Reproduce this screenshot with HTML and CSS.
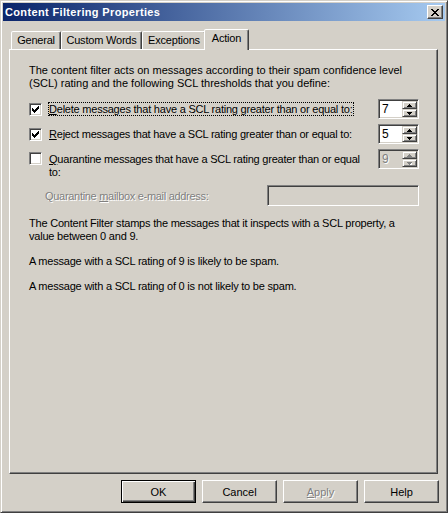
FILE: index.html
```html
<!DOCTYPE html>
<html>
<head>
<meta charset="utf-8">
<title>Content Filtering Properties</title>
<link rel="stylesheet" href="styles.css">
</head>
<body>
<div class="window">
  <div class="titlebar">
    <span class="title">Content Filtering Properties</span>
    <span class="close">
      <svg width="8" height="7" viewBox="0 0 8 7" shape-rendering="crispEdges"><path fill="#000" d="M0 0h2v1H0zM6 0h2v1H6zM1 1h2v1H1zM5 1h2v1H5zM2 2h4v1H2zM3 3h2v1H3zM2 4h4v1H2zM1 5h2v1H1zM5 5h2v1H5zM0 6h2v1H0zM6 6h2v1H6z"/></svg>
    </span>
  </div>

  <div class="tabs">
    <div class="tab tab-general">General</div>
    <div class="tab tab-custom">Custom Words</div>
    <div class="tab tab-exceptions">Exceptions</div>
    <div class="tab tab-action active">Action</div>
  </div>

  <div class="panel">
    <p class="intro">The content filter acts on messages according to their spam confidence level<br>(SCL) rating and the following SCL thresholds that you define:</p>

    <div class="row">
      <span class="check"><svg width="11" height="11" viewBox="0 0 11 11" shape-rendering="crispEdges"><path fill="#000" d="M2 4h1v3H2zM3 5h1v3H3zM4 6h1v3H4zM5 5h1v3H5zM6 4h1v3H6zM7 3h1v3H7zM8 2h1v3H8z"/></svg></span>
      <span class="label focus"><u>D</u>elete messages that have a SCL rating greater than or equal to:</span>
      <span class="spin">
        <span class="spin-value">7</span>
        <span class="spin-btns">
          <span class="spin-btn"><svg width="5" height="3" viewBox="0 0 5 3" shape-rendering="crispEdges"><path d="M2 0h1v1H2zM1 1h3v1H1zM0 2h5v1H0z"/></svg></span>
          <span class="spin-btn"><svg width="5" height="3" viewBox="0 0 5 3" shape-rendering="crispEdges"><path d="M0 0h5v1H0zM1 1h3v1H1zM2 2h1v1H2z"/></svg></span>
        </span>
      </span>
    </div>

    <div class="row">
      <span class="check"><svg width="11" height="11" viewBox="0 0 11 11" shape-rendering="crispEdges"><path fill="#000" d="M2 4h1v3H2zM3 5h1v3H3zM4 6h1v3H4zM5 5h1v3H5zM6 4h1v3H6zM7 3h1v3H7zM8 2h1v3H8z"/></svg></span>
      <span class="label"><u>R</u>eject messages that have a SCL rating greater than or equal to:</span>
      <span class="spin">
        <span class="spin-value">5</span>
        <span class="spin-btns">
          <span class="spin-btn"><svg width="5" height="3" viewBox="0 0 5 3" shape-rendering="crispEdges"><path d="M2 0h1v1H2zM1 1h3v1H1zM0 2h5v1H0z"/></svg></span>
          <span class="spin-btn"><svg width="5" height="3" viewBox="0 0 5 3" shape-rendering="crispEdges"><path d="M0 0h5v1H0zM1 1h3v1H1zM2 2h1v1H2z"/></svg></span>
        </span>
      </span>
    </div>

    <div class="row row-top">
      <span class="check"></span>
      <span class="label"><u>Q</u>uarantine messages that have a SCL rating greater than or equal<br>to:</span>
      <span class="spin disabled">
        <span class="spin-value">9</span>
        <span class="spin-btns">
          <span class="spin-btn"><svg width="5" height="3" viewBox="0 0 5 3" shape-rendering="crispEdges"><path fill="#fff" transform="translate(1 1)" d="M2 0h1v1H2zM1 1h3v1H1zM0 2h5v1H0z"/><path fill="#808080" d="M2 0h1v1H2zM1 1h3v1H1zM0 2h5v1H0z"/></svg></span>
          <span class="spin-btn"><svg width="5" height="3" viewBox="0 0 5 3" shape-rendering="crispEdges"><path fill="#fff" transform="translate(1 1)" d="M0 0h5v1H0zM1 1h3v1H1zM2 2h1v1H2z"/><path fill="#808080" d="M0 0h5v1H0zM1 1h3v1H1zM2 2h1v1H2z"/></svg></span>
        </span>
      </span>
    </div>

    <div class="row row-mailbox">
      <span class="mailbox-label disabled-text">Quarantine <u>m</u>ailbox e-mail address:</span>
      <span class="textbox"></span>
    </div>

    <p class="note">The Content Filter stamps the messages that it inspects with a SCL property, a<br>value between 0 and 9.</p>
    <p class="note">A message with a SCL rating of 9 is likely to be spam.</p>
    <p class="note">A message with a SCL rating of 0 is not likely to be spam.</p>
  </div>

  <div class="buttons">
    <span class="btn default">OK</span>
    <span class="btn">Cancel</span>
    <span class="btn"><span class="disabled-text"><u>A</u>pply</span></span>
    <span class="btn">Help</span>
  </div>
</div>
</body>
</html>
```

FILE: styles.css
```css
* { box-sizing: border-box; }

html, body {
  margin: 0;
  padding: 0;
}

body {
  background: #D4D0C8;
  font-family: "Liberation Sans", Arial, sans-serif;
  font-size: 11px;
  color: #000;
}

.window {
  width: 448px;
  height: 513px;
  border: 1px solid;
  border-color: #D4D0C8 #404040 #404040 #D4D0C8;
  box-shadow: inset 1px 1px #fff, inset -1px -1px #808080;
  padding: 2px;
  display: flex;
  flex-direction: column;
  background: #D4D0C8;
}

/* ---------- title bar ---------- */
.titlebar {
  height: 18px;
  flex: none;
  display: flex;
  align-items: center;
  padding-left: 2px;
  background: linear-gradient(to right, #0A246A, #A6CAF0);
}

.title {
  flex: 1;
  color: #fff;
  font-weight: bold;
  letter-spacing: 0.35px;
  line-height: 18px;
  white-space: nowrap;
}

.close {
  width: 16px;
  height: 14px;
  margin-right: 2px;
  background: #D4D0C8;
  border: 1px solid;
  border-color: #fff #404040 #404040 #fff;
  box-shadow: inset -1px -1px #808080;
  display: flex;
  align-items: center;
  justify-content: center;
}

.close svg { display: block; margin-left: -1px; }

/* ---------- tabs ---------- */
.tabs {
  flex: none;
  height: 20px;
  margin: 8px 0 0 8px;
  display: flex;
  align-items: flex-end;
  position: relative;
  z-index: 2;
}

.tab {
  height: 18px;
  background: #D4D0C8;
  border: 1px solid;
  border-bottom: 0;
  border-color: #fff #404040 transparent #fff;
  box-shadow: inset -1px 0 #808080;
  border-radius: 2px 2px 0 0;
  text-align: center;
  line-height: 17px;
  letter-spacing: -0.2px;
  white-space: nowrap;
}

.tab-general { width: 50px; }
.tab-custom { width: 81px; }
.tab-exceptions { width: 64px; }
.tab-action { width: 45px; }

.tab.active {
  height: 21px;
  margin-left: -2px;
  margin-bottom: -1px;
  position: relative;
}

/* ---------- panel ---------- */
.panel {
  flex: 1;
  margin: 0 7px 0 6px;
  border: 1px solid;
  border-color: #fff #404040 #404040 #fff;
  box-shadow: inset -1px -1px #808080;
  padding: 14px 18px 0 19px;
}

.panel p {
  margin: 0;
  line-height: 13px;
  white-space: nowrap;
}

.intro { margin-bottom: 9px !important; }

.row {
  display: flex;
  align-items: center;
  height: 20px;
}

.row + .row { margin-top: 5px; }

.row-top {
  align-items: flex-start;
  height: 30px;
}

.row-top .check,
.row-top .label { margin-top: 3px; }

.check {
  flex: none;
  width: 13px;
  height: 13px;
  margin-right: 6px;
  background: #fff;
  border: 1px solid;
  border-color: #808080 #fff #fff #808080;
  box-shadow: inset 1px 1px #404040, inset -1px -1px #D4D0C8;
}

.check svg { display: block; }

.label {
  border: 1px solid transparent;
  line-height: 12px;
  letter-spacing: -0.22px;
  white-space: nowrap;
}

.row-top .label { line-height: 13px; }

.label.focus {
  border: 1px dotted #000;
}

/* ---------- spinner ---------- */
.spin {
  flex: none;
  margin-left: auto;
  width: 41px;
  height: 20px;
  display: flex;
  border: 1px solid;
  border-color: #808080 #fff #fff #808080;
  box-shadow: inset 1px 1px #404040, inset -1px -1px #D4D0C8;
  padding: 1px;
}

.spin-value {
  flex: 1;
  background: #fff;
  padding-left: 2px;
  line-height: 16px;
  font-size: 12px;
}

.spin-btns {
  width: 15px;
  display: flex;
  flex-direction: column;
}

.spin-btn {
  height: 8px;
  background: #D4D0C8;
  border: 1px solid;
  border-color: #D4D0C8 #404040 #404040 #D4D0C8;
  box-shadow: inset 1px 1px #fff, inset -1px -1px #808080;
  display: flex;
  align-items: center;
  justify-content: center;
}

.spin-btn svg { display: block; }

.spin.disabled .spin-value {
  background: #D4D0C8;
  color: #808080;
  text-shadow: 1px 1px #fff;
}

/* ---------- mailbox row ---------- */
.row-mailbox {
  margin-top: 6px !important;
  height: 21px;
}

.mailbox-label {
  margin-left: 16px;
  letter-spacing: -0.3px;
  white-space: nowrap;
}

.disabled-text {
  color: #808080;
  text-shadow: 1px 1px #fff;
}

.textbox {
  margin-left: auto;
  width: 152px;
  height: 21px;
  background: #D4D0C8;
  border: 1px solid;
  border-color: #808080 #fff #fff #808080;
  box-shadow: inset 1px 1px #404040, inset -1px -1px #D4D0C8;
}

.note {
  margin-top: 12px !important;
  letter-spacing: -0.21px;
}

.row-mailbox + .note { margin-top: 11px !important; }

/* ---------- buttons ---------- */
.buttons {
  flex: none;
  height: 23px;
  margin: 6px 6px 7px 0;
  display: flex;
  justify-content: flex-end;
  gap: 6px;
}

.btn {
  width: 75px;
  height: 23px;
  background: #D4D0C8;
  border: 1px solid;
  border-color: #fff #404040 #404040 #fff;
  box-shadow: inset -1px -1px #808080;
  display: flex;
  align-items: center;
  justify-content: center;
  white-space: nowrap;
}

.btn.default {
  border-color: #000;
  box-shadow: inset 1px 1px #fff, inset -1px -1px #404040, inset -2px -2px #808080;
}
```
